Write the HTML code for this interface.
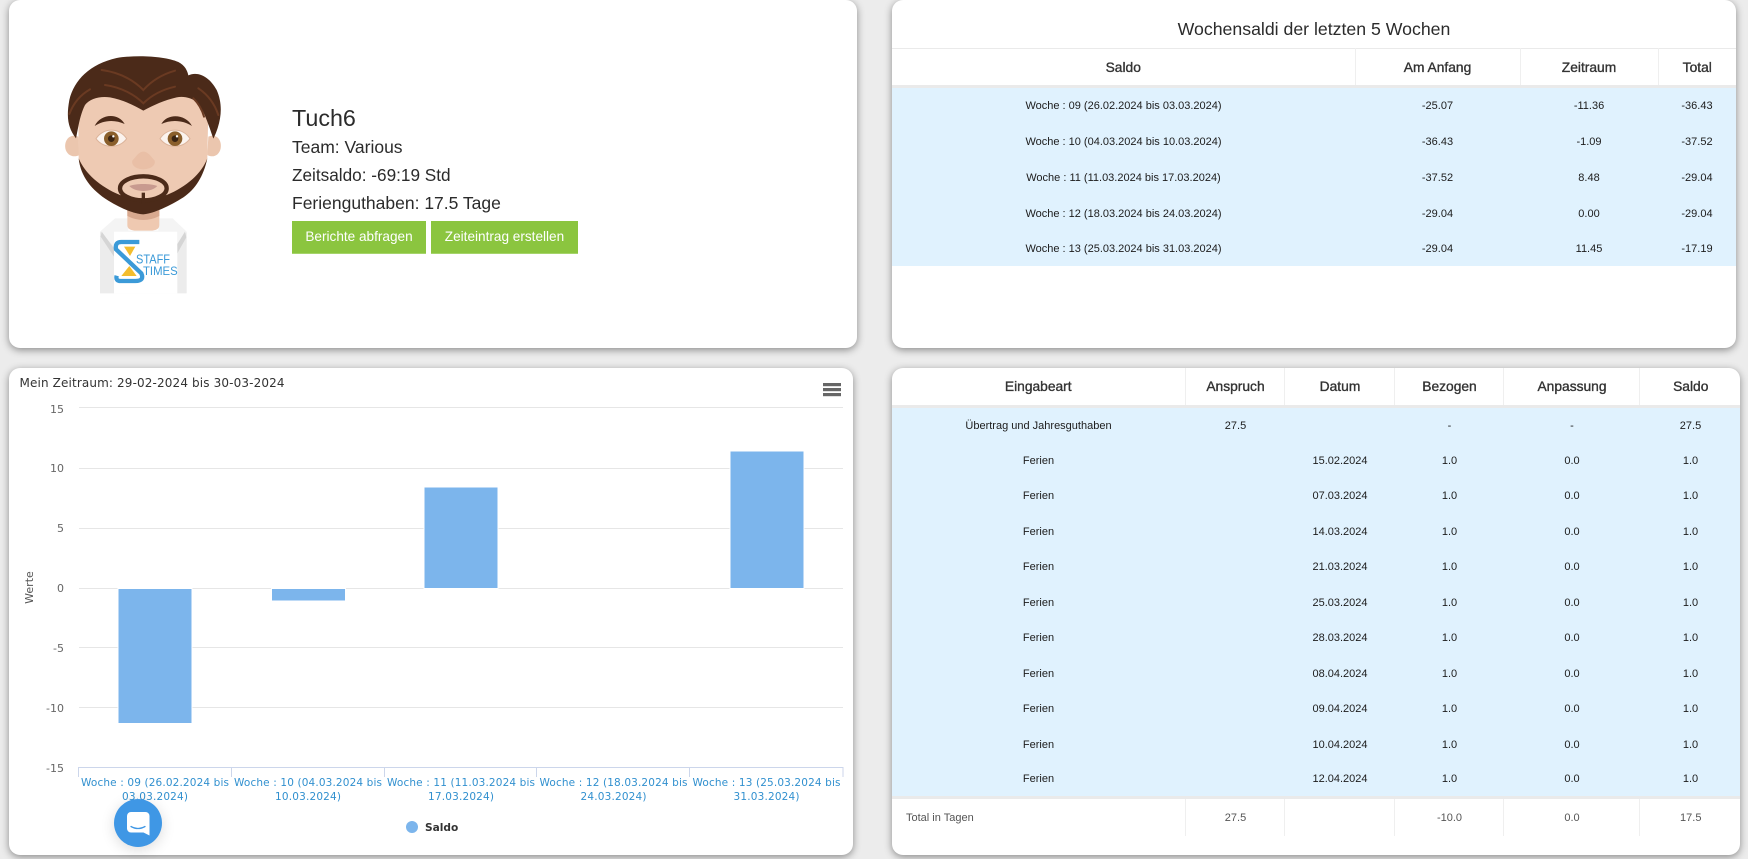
<!DOCTYPE html>
<html lang="de">
<head>
<meta charset="utf-8">
<title>Staff Times Dashboard</title>
<style>
html,body{margin:0;padding:0;width:1748px;height:859px;overflow:hidden;background:#ececec;font-family:"Liberation Sans",sans-serif;color:#222}
.card{position:absolute;background:#fff;border-radius:11px;box-shadow:0 2px 8px rgba(0,0,0,.42);overflow:hidden}
#c1{left:9px;top:0;width:848px;height:348px}
#c2{left:892px;top:0;width:844px;height:348px}
#c3{left:9px;top:368px;width:844px;height:487px}
#c4{left:892px;top:368px;width:848px;height:487px}
.abs{position:absolute;white-space:nowrap;color:#2b2b2b}
.btn{position:absolute;top:221px;height:32px;line-height:32px;background:#8bc53f;color:#fff;text-align:center;font-size:13.6px;border-bottom:1px solid #a5d46a;box-sizing:content-box}
table{border-collapse:collapse;table-layout:fixed;position:absolute;left:0;font-size:11px}
td,th{padding:0;text-align:center;vertical-align:middle;overflow:hidden;white-space:nowrap}
th{font-size:13.8px;font-weight:normal;color:#333;-webkit-text-stroke:.35px #333;border-left:1px solid #efefef;border-bottom:3px solid #eaeaea;padding-top:1px}
th:first-child{border-left:0}
tbody.b td{background:#e0f2fe;color:#1c1c1c;padding-top:2px}
tfoot td{border-left:1px solid #efefef;border-top:3px solid #eaeaea;color:#555;padding-top:2px}
tfoot td:first-child{border-left:0;text-align:left;padding-left:14px}
#c4 td+td,#c4 th+th{padding-left:2px}
</style>
</head>
<body>

<div class="card" id="c1"></div>
<div class="card" id="c2">
  <div class="abs" style="left:0;width:844px;top:18px;height:22px;line-height:22px;text-align:center;font-size:17.7px">Wochensaldi der letzten 5 Wochen</div>
  <table style="top:48px;width:844px;border-top:1px solid #eaeaea">
    <colgroup><col style="width:463px"><col style="width:165px"><col style="width:138px"><col style="width:78px"></colgroup>
    <thead><tr style="height:38px"><th>Saldo</th><th>Am Anfang</th><th>Zeitraum</th><th>Total</th></tr></thead>
    <tbody class="b">
      <tr style="height:36px"><td>Woche : 09 (26.02.2024 bis 03.03.2024)</td><td>-25.07</td><td>-11.36</td><td>-36.43</td></tr>
      <tr style="height:36px"><td>Woche : 10 (04.03.2024 bis 10.03.2024)</td><td>-36.43</td><td>-1.09</td><td>-37.52</td></tr>
      <tr style="height:36px"><td>Woche : 11 (11.03.2024 bis 17.03.2024)</td><td>-37.52</td><td>8.48</td><td>-29.04</td></tr>
      <tr style="height:36px"><td>Woche : 12 (18.03.2024 bis 24.03.2024)</td><td>-29.04</td><td>0.00</td><td>-29.04</td></tr>
      <tr style="height:35px"><td>Woche : 13 (25.03.2024 bis 31.03.2024)</td><td>-29.04</td><td>11.45</td><td>-17.19</td></tr>
    </tbody>
  </table>
</div>
<div class="card" id="c3"></div>
<div class="card" id="c4">
  <table style="top:0;width:848px">
    <colgroup><col style="width:293px"><col style="width:99px"><col style="width:110px"><col style="width:109px"><col style="width:136px"><col style="width:101px"></colgroup>
    <thead><tr style="height:38px"><th>Eingabeart</th><th>Anspruch</th><th>Datum</th><th>Bezogen</th><th>Anpassung</th><th>Saldo</th></tr></thead>
    <tbody class="b">
      <tr style="height:36px"><td>Übertrag und Jahresguthaben</td><td>27.5</td><td></td><td>-</td><td>-</td><td>27.5</td></tr>
      <tr style="height:35px"><td>Ferien</td><td></td><td>15.02.2024</td><td>1.0</td><td>0.0</td><td>1.0</td></tr>
      <tr style="height:36px"><td>Ferien</td><td></td><td>07.03.2024</td><td>1.0</td><td>0.0</td><td>1.0</td></tr>
      <tr style="height:35px"><td>Ferien</td><td></td><td>14.03.2024</td><td>1.0</td><td>0.0</td><td>1.0</td></tr>
      <tr style="height:36px"><td>Ferien</td><td></td><td>21.03.2024</td><td>1.0</td><td>0.0</td><td>1.0</td></tr>
      <tr style="height:35px"><td>Ferien</td><td></td><td>25.03.2024</td><td>1.0</td><td>0.0</td><td>1.0</td></tr>
      <tr style="height:36px"><td>Ferien</td><td></td><td>28.03.2024</td><td>1.0</td><td>0.0</td><td>1.0</td></tr>
      <tr style="height:35px"><td>Ferien</td><td></td><td>08.04.2024</td><td>1.0</td><td>0.0</td><td>1.0</td></tr>
      <tr style="height:36px"><td>Ferien</td><td></td><td>09.04.2024</td><td>1.0</td><td>0.0</td><td>1.0</td></tr>
      <tr style="height:35px"><td>Ferien</td><td></td><td>10.04.2024</td><td>1.0</td><td>0.0</td><td>1.0</td></tr>
      <tr style="height:36px"><td>Ferien</td><td></td><td>12.04.2024</td><td>1.0</td><td>0.0</td><td>1.0</td></tr>
    </tbody>
    <tfoot><tr style="height:39px"><td>Total in Tagen</td><td>27.5</td><td></td><td>-10.0</td><td>0.0</td><td>17.5</td></tr></tfoot>
  </table>
</div>

<!-- profile text -->
<div class="abs" style="left:292px;top:104px;height:28px;line-height:28px;font-size:23.3px">Tuch6</div>
<div class="abs" style="left:292px;top:136px;height:22px;line-height:22px;font-size:17.5px">Team: Various</div>
<div class="abs" style="left:292px;top:164px;height:22px;line-height:22px;font-size:17.2px">Zeitsaldo: -69:19 Std</div>
<div class="abs" style="left:292px;top:192px;height:22px;line-height:22px;font-size:17.5px">Ferienguthaben: 17.5 Tage</div>
<div class="btn" style="left:292px;width:134px">Berichte abfragen</div>
<div class="btn" style="left:431px;width:147px">Zeiteintrag erstellen</div>

<!-- avatar -->
<svg style="position:absolute;left:50px;top:40px" width="200" height="270" viewBox="0 0 600 810">
  <path d="M85 290C60 280 42 300 46 325C50 345 70 355 88 345Z" fill="#ebc6ae"/>
  <path d="M475 290C500 280 516 300 512 325C508 345 490 355 472 345Z" fill="#ebc6ae"/>
  <!-- shirt -->
  <rect x="150" y="575" width="260" height="185" fill="#ececec"/>
  <path d="M192 575H382V760H192Z" fill="#fff"/>
  <path d="M150 575L195 535H235V572H325V535H368L410 575L382 620V575H192V620Z" fill="#f4f4f4"/>
  <path d="M155 575L192 625V650L152 590Z" fill="#d5d5d5"/>
  <path d="M405 575L382 612V640L409 592Z" fill="#d5d5d5"/>
  <path d="M232 505H328V555Q328 572 300 572H260Q232 572 232 555Z" fill="#efc9b1"/>
  <path d="M232 505H328V528Q280 552 232 528Z" fill="#d8a98f"/>
  <!-- face -->
  <path d="M85 210C85 150 170 120 280 120C390 120 470 150 475 210L472 355C460 410 436 447 400 472C360 497 310 521 280 523C255 522 215 507 175 482C125 450 92 410 86 355Z" fill="#eecab3"/>
  <!-- hair -->
  <path d="M78 295C55 265 48 235 58 180C72 120 120 72 200 54C260 44 345 48 385 66C405 76 412 92 415 106C445 92 480 112 500 150C520 195 515 245 490 296C478 262 465 218 445 190C425 172 400 168 380 172C345 180 310 195 280 212C250 195 215 178 180 172C150 168 120 175 105 195C90 225 85 260 78 295Z" fill="#4b2a19"/>
  <g fill="none" stroke="#6a3a22" stroke-width="6" stroke-linecap="round">
    <path d="M155 90C215 98 255 125 280 150C305 122 340 102 375 92"/>
    <path d="M165 135C215 142 255 165 280 190C305 165 340 148 375 140"/>
    <path d="M58 222C70 190 90 165 120 148"/>
    <path d="M505 225C495 195 475 165 445 145"/>
    <path d="M462 230C455 205 445 190 430 175"/>
  </g>
  <!-- brows -->
  <path d="M134 258C150 222 205 216 224 252C195 238 160 240 134 258Z" fill="#4b2a19"/>
  <path d="M334 252C352 218 408 222 426 258C400 240 362 238 334 252Z" fill="#4b2a19"/>
  <!-- eyes -->
  <path d="M138 296C160 262 208 262 230 296C208 326 160 326 138 296Z" fill="#fbf3ee" stroke="#dcb49b" stroke-width="3"/>
  <path d="M330 296C352 262 398 262 420 296C398 326 352 326 330 296Z" fill="#fbf3ee" stroke="#dcb49b" stroke-width="3"/>
  <circle cx="184" cy="296" r="22" fill="#8a5f2c"/><circle cx="184" cy="296" r="10" fill="#3a2413"/><circle cx="190" cy="289" r="3.500" fill="#fff"/>
  <circle cx="375" cy="296" r="22" fill="#8a5f2c"/><circle cx="375" cy="296" r="10" fill="#3a2413"/><circle cx="381" cy="289" r="3.500" fill="#fff"/>
  <!-- nose -->
  <path d="M247 362C262 345 268 335 280 335C292 335 300 345 314 362C318 378 298 388 280 388C262 388 243 378 247 362Z" fill="#e9bfa6"/>
  <!-- beard -->
  <path d="M86 355C92 410 125 450 175 482C215 507 255 522 280 523C310 521 360 497 400 472C436 447 460 410 472 355C455 400 410 440 350 465L280 480L210 465C150 440 105 400 86 355Z" fill="#4b2a19"/>
  <ellipse cx="280" cy="445" rx="70" ry="36" fill="#eecab3" stroke="#4b2a19" stroke-width="13"/>
  <path d="M280 458V492" stroke="#4b2a19" stroke-width="10"/>
  <path d="M238 438C260 430 300 430 322 438C305 458 255 458 238 438Z" fill="#c89a8f"/>
  <!-- logo -->
  <path d="M268 606H214Q194 606 198 628L274 700Q284 723 256 723H212Q196 723 200 707" fill="none" stroke="#3b9ad8" stroke-width="13"/>
  <path d="M222 620H256L240 648Z" fill="#f3bd2e"/>
  <path d="M214 708H260L238 678Z" fill="#f3bd2e"/>
  <text x="258" y="670" font-family="Liberation Sans" font-size="38" fill="#3b9ad8" textLength="102" lengthAdjust="spacingAndGlyphs">STAFF</text>
  <text x="279" y="705" font-family="Liberation Sans" font-size="36" fill="#3b9ad8" textLength="104" lengthAdjust="spacingAndGlyphs">TIMES</text>
</svg>

<!-- chart -->
<svg style="position:absolute;left:0;top:0" width="1748" height="859" viewBox="0 0 1748 859">
  <text x="19.500" y="387" font-family="DejaVu Sans" font-size="12" fill="#333" textLength="265">Mein Zeitraum: 29-02-2024 bis 30-03-2024</text>
  <g fill="#666"><rect x="823" y="383" width="18" height="3.200"/><rect x="823" y="388" width="18" height="3.200"/><rect x="823" y="393" width="18" height="3.200"/></g>
  <g stroke="#e6e6e6" stroke-width="1">
    <path d="M79 407.500H843M79 468.500H843M79 528.500H843M79 588.500H843M79 647.500H843M79 707.500H843"/>
  </g>
  <path d="M79 767.500H843M78.500 767V777M231.500 767V777M384.500 767V777M536.500 767V777M689.500 767V777M843 767V777" stroke="#ccd6eb" stroke-width="1" fill="none"/>
  <g fill="#7cb5ec" stroke="#fff" stroke-width="1">
    <rect x="118" y="588.500" width="74" height="135"/>
    <rect x="271.500" y="588.500" width="74" height="12.500"/>
    <rect x="424" y="487" width="74" height="101.500"/>
    <rect x="730" y="451" width="74" height="137.500"/>
  </g>
  <g font-family="DejaVu Sans" font-size="11" fill="#666" text-anchor="end">
    <text x="64" y="413">15</text><text x="64" y="472">10</text><text x="64" y="532">5</text><text x="64" y="592">0</text><text x="64" y="652">-5</text><text x="64" y="712">-10</text><text x="64" y="772">-15</text>
  </g>
  <text transform="rotate(-90 33 587.500)" x="33" y="587.500" font-family="DejaVu Sans" font-size="11" fill="#555" text-anchor="middle">Werte</text>
  <g font-family="DejaVu Sans" font-size="10.500" fill="#3190cf" text-anchor="middle">
    <text x="155" y="786" textLength="148">Woche : 09 (26.02.2024 bis</text><text x="155" y="800" textLength="66">03.03.2024)</text>
    <text x="308" y="786" textLength="148">Woche : 10 (04.03.2024 bis</text><text x="308" y="800" textLength="66">10.03.2024)</text>
    <text x="461" y="786" textLength="148">Woche : 11 (11.03.2024 bis</text><text x="461" y="800" textLength="66">17.03.2024)</text>
    <text x="613.500" y="786" textLength="148">Woche : 12 (18.03.2024 bis</text><text x="613.500" y="800" textLength="66">24.03.2024)</text>
    <text x="766.500" y="786" textLength="148">Woche : 13 (25.03.2024 bis</text><text x="766.500" y="800" textLength="66">31.03.2024)</text>
  </g>
  <circle cx="412" cy="827" r="6" fill="#7cb5ec"/>
  <text x="425" y="831" font-family="DejaVu Sans" font-weight="bold" font-size="10.600" fill="#333">Saldo</text>
</svg>

<!-- chat button -->
<div style="position:absolute;left:114px;top:799px;width:48px;height:48px;border-radius:50%;background:#3f97e5;box-shadow:0 3px 14px rgba(0,0,0,.14)"></div>
<svg style="position:absolute;left:114px;top:799px" width="48" height="48" viewBox="114 799 48 48">
  <path d="M131 812H145.500A4 4 0 0 1 149.500 816V835.500L143.500 832.500H131A4 4 0 0 1 127 828.500V816A4 4 0 0 1 131 812Z" fill="#fff"/>
  <path d="M131 826.500Q138 830.500 145 826.500" fill="none" stroke="#3f97e5" stroke-width="1.300" stroke-linecap="round"/>
</svg>

</body>
</html>
